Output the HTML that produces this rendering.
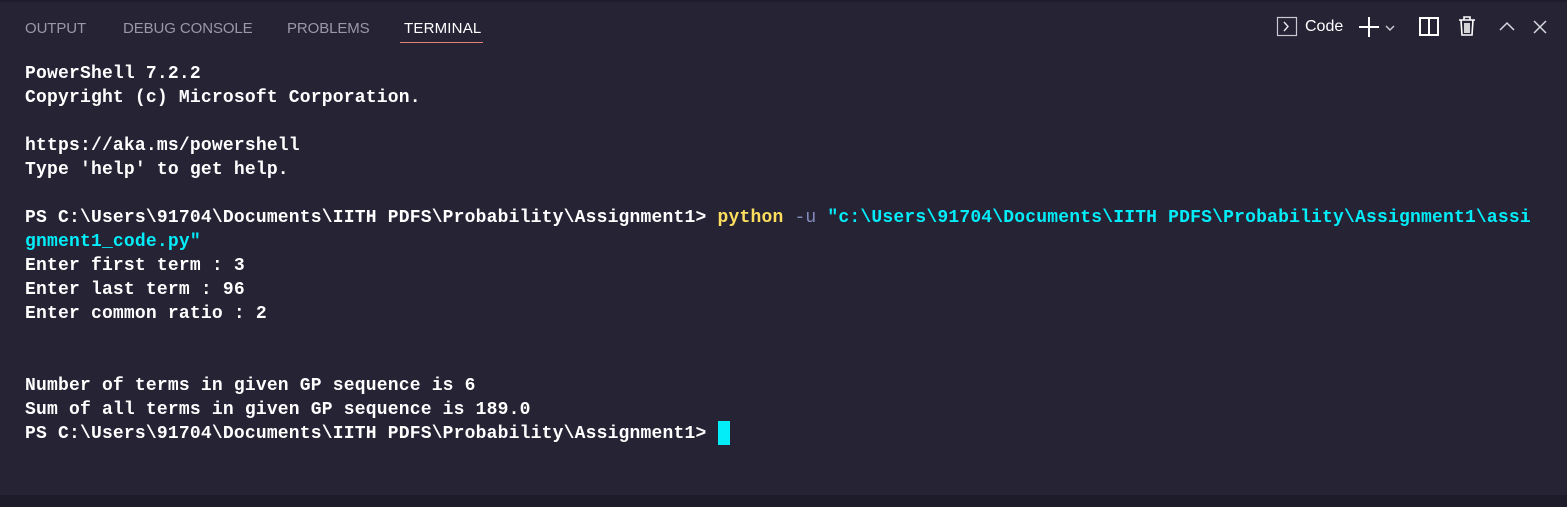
<!DOCTYPE html>
<html><head><style>
body{margin:0;width:1567px;height:507px;background:#262335;overflow:hidden;position:relative;font-family:"Liberation Sans",sans-serif}
.top{position:absolute;left:0;top:0;width:1567px;height:2px;background:#1f1d2c}
.tab{position:absolute;top:20px;font-size:15px;color:#9a98a8;letter-spacing:-0.1px}
.act{color:#ffffff;letter-spacing:0.2px}
.ul{position:absolute;left:400px;top:42px;width:83px;height:1px;background:#e4807a}
pre{position:absolute;left:25px;top:62px;margin:0;font-family:"Liberation Mono",monospace;font-size:18px;letter-spacing:0.19px;line-height:24px;color:#ffffff;font-weight:bold}
.y{color:#fede5d}.g{color:#848bbd;font-weight:normal}.c{color:#03edf9}
.cur{position:absolute;left:718px;top:421px;width:12px;height:24px;background:#03edf9}
.status{position:absolute;left:0;top:495px;width:1567px;height:12px;background:#1e1c2b}
.ic{position:absolute;top:15px}
</style></head><body>
<div class="top"></div>
<div class="tab" style="left:25px">OUTPUT</div>
<div class="tab" style="left:123px">DEBUG CONSOLE</div>
<div class="tab" style="left:287px">PROBLEMS</div>
<div class="tab act" style="left:404px">TERMINAL</div>
<div class="ul"></div>
<svg class="ic" style="left:1276px" width="22" height="22" viewBox="0 0 22 22"><rect x="1.5" y="2.5" width="19" height="18" fill="none" stroke="#c8c8d0" stroke-width="1.2"/><path d="M8 7l4 4.5-4 4.5" fill="none" stroke="#e8e8f0" stroke-width="1.4"/></svg>
<div style="position:absolute;left:1305px;top:18px;font-size:16px;color:#fff">Code</div>
<svg class="ic" style="left:1357px" width="44" height="24" viewBox="0 0 44 24"><path d="M12 2v20M2 12h20" stroke="#fff" stroke-width="2"/><path d="M29 11l4 4 4-4" fill="none" stroke="#d0d0d8" stroke-width="1.4"/></svg>
<svg class="ic" style="left:1418px" width="22" height="22" viewBox="0 0 22 22"><rect x="2" y="3" width="18" height="17" fill="none" stroke="#fff" stroke-width="2"/><path d="M11 3v17" stroke="#fff" stroke-width="2"/></svg>
<svg class="ic" style="left:1457px" width="20" height="22" viewBox="0 0 20 22"><path d="M2 5h16M7 5V2h6v3M4 5l1 15h10l1-15M8 8v10M10 8v10M12 8v10" fill="none" stroke="#fff" stroke-width="1.6"/></svg>
<svg class="ic" style="left:1497px" width="20" height="22" viewBox="0 0 20 22"><path d="M3 15l7-7 7 7" fill="none" stroke="#d8d8e0" stroke-width="1.5"/></svg>
<svg class="ic" style="left:1530px" width="20" height="22" viewBox="0 0 20 22"><path d="M4 6l12 12M16 6L4 18" fill="none" stroke="#d8d8e0" stroke-width="1.5"/></svg>
<pre>PowerShell 7.2.2
Copyright (c) Microsoft Corporation.

https://aka.ms/powershell
Type 'help' to get help.

PS C:\Users\91704\Documents\IITH PDFS\Probability\Assignment1&gt; <span class="y">python</span> <span class="g">-u</span> <span class="c">"c:\Users\91704\Documents\IITH PDFS\Probability\Assignment1\assi
gnment1_code.py"</span>
Enter first term : 3
Enter last term : 96
Enter common ratio : 2


Number of terms in given GP sequence is 6
Sum of all terms in given GP sequence is 189.0
PS C:\Users\91704\Documents\IITH PDFS\Probability\Assignment1&gt; </pre>
<div class="cur"></div>
<div class="status"></div>
</body></html>
